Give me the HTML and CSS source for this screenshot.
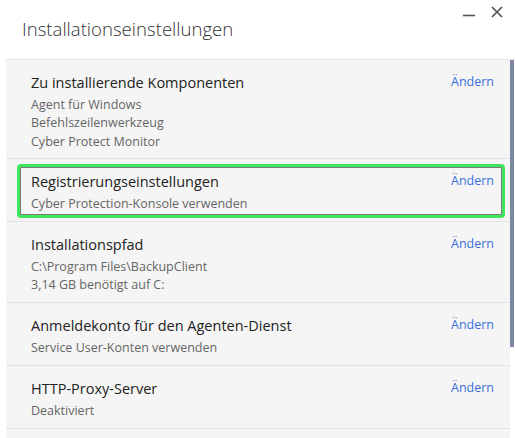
FILE: index.html
```html
<!DOCTYPE html>
<html lang="de">
<head>
    <meta charset="UTF-8">
    <meta name="viewport" content="width=device-width, initial-scale=1.0">
    <title>Installationseinstellungen</title>
    <link rel="stylesheet" href="styles.css">
</head>
<body>
    <div class="dialog">
        <div class="dialog-header">
            <h1>Installationseinstellungen</h1>
            <div class="window-buttons">
                <button class="win-btn" title="Minimieren">
                    <svg width="14" height="14" viewBox="0 0 14 14"><path d="M1 10.5h12" stroke="#555" stroke-width="1.6"/></svg>
                </button>
                <button class="win-btn" title="Schließen">
                    <svg width="14" height="14" viewBox="0 0 14 14"><path d="M2 2l10 10M12 2L2 12" stroke="#555" stroke-width="1.7"/></svg>
                </button>
            </div>
        </div>

        <div class="settings-wrap">
            <div class="settings-list">
                <div class="setting">
                    <div class="setting-text">
                        <div class="setting-title">Zu installierende Komponenten</div>
                        <div class="setting-value">Agent für Windows</div>
                        <div class="setting-value">Befehlszeilenwerkzeug</div>
                        <div class="setting-value">Cyber Protect Monitor</div>
                    </div>
                    <a class="change-link" href="#">Ändern</a>
                </div>

                <div class="setting selected">
                    <div class="setting-text">
                        <div class="setting-title">Registrierungseinstellungen</div>
                        <div class="setting-value">Cyber Protection-Konsole verwenden</div>
                    </div>
                    <a class="change-link" href="#">Ändern</a>
                </div>

                <div class="setting">
                    <div class="setting-text">
                        <div class="setting-title">Installationspfad</div>
                        <div class="setting-value">C:\Program Files\BackupClient</div>
                        <div class="setting-value">3,14 GB benötigt auf C:</div>
                    </div>
                    <a class="change-link" href="#">Ändern</a>
                </div>

                <div class="setting">
                    <div class="setting-text">
                        <div class="setting-title">Anmeldekonto für den Agenten-Dienst</div>
                        <div class="setting-value">Service User-Konten verwenden</div>
                    </div>
                    <a class="change-link" href="#">Ändern</a>
                </div>

                <div class="setting">
                    <div class="setting-text">
                        <div class="setting-title">HTTP-Proxy-Server</div>
                        <div class="setting-value">Deaktiviert</div>
                    </div>
                    <a class="change-link" href="#">Ändern</a>
                </div>
            </div>

            <div class="scrollbar">
                <div class="scroll-thumb"></div>
            </div>
        </div>
    </div>
</body>
</html>
```

FILE: styles.css
```css
body {
    margin: 0;
    background-color: #fff;
    font-family: "Open Sans", "Noto Sans", sans-serif;
    color: #222;
}

.dialog {
    width: 515px;
    height: 438px;
    overflow: hidden;
    display: flex;
    flex-direction: column;
}

.dialog-header {
    height: 59px;
    flex-shrink: 0;
    display: flex;
    justify-content: space-between;
    align-items: flex-start;
}

h1 {
    margin: 18px 0 0 22px;
    font-size: 18.6px;
    font-weight: 300;
    color: #333;
    line-height: 22px;
}

.window-buttons {
    display: flex;
    gap: 14px;
    margin: 5px 11px 0 0;
}

.win-btn {
    border: none;
    background: none;
    padding: 0;
    width: 14px;
    height: 14px;
    display: flex;
}

.settings-wrap {
    flex: 1;
    display: flex;
    margin-left: 6px;
    border-top: 1px solid #e3e3e8;
}

.settings-list {
    width: 504px;
    background-color: #f5f5f5;
}

.setting {
    position: relative;
    display: flex;
    justify-content: space-between;
    align-items: flex-start;
    padding: 13px 16px 7.5px 25px;
    border-bottom: 1px solid #e2e2e8;
}

.setting-title {
    font-size: 14.5px;
    line-height: 20px;
    color: #222;
    margin-bottom: 3px;
}

.setting-value {
    font-size: 12.5px;
    line-height: 18.3px;
    color: #666;
}

.change-link {
    font-size: 12.5px;
    line-height: 18px;
    color: #3a6fd8;
    text-decoration: none;
}

/* focus frame around the active entry */
.setting.selected::after {
    content: "";
    position: absolute;
    left: 11px;
    right: 5px;
    top: 5px;
    bottom: 3px;
    border: 3px solid #3fe65c;
    border-radius: 4px;
    box-shadow: inset 0 0 0 1px #7a7a7a;
}

.scrollbar {
    width: 4px;
    background-color: #fff;
}

.scroll-thumb {
    height: 287px;
    background-color: #7c889f;
}
```
